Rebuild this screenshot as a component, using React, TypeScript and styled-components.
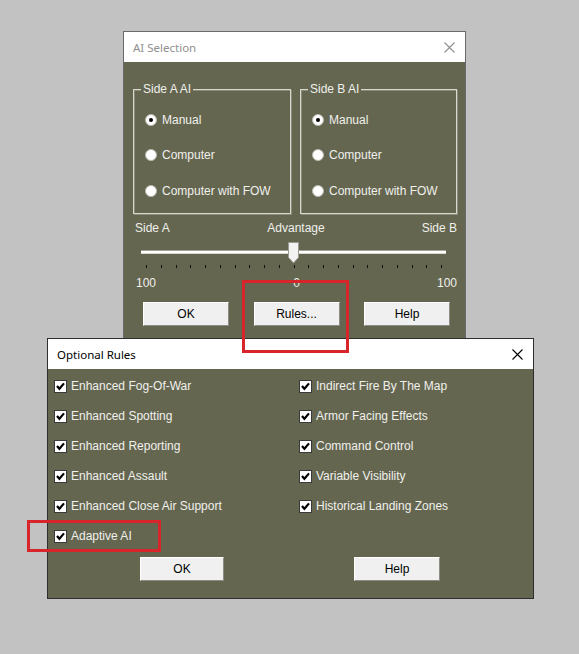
import styled, { createGlobalStyle } from 'styled-components';

const GlobalStyle = createGlobalStyle`
    html, body {
        margin: 0;
        padding: 0;
        background: #c2c2c2;
    }
    * {
        box-sizing: border-box;
    }
`;

const OLIVE = '#646650';

const Desktop = styled.div`
    position: relative;
    width: 579px;
    height: 654px;
    overflow: hidden;
    background: #c2c2c2;
    font-family: "Liberation Sans", Arial, sans-serif;
    font-size: 12px;
`;

const Window = styled.div<{ $left: number; $top: number; $width: number; $height: number; $active?: boolean }>`
    position: absolute;
    left: ${(p) => p.$left}px;
    top: ${(p) => p.$top}px;
    width: ${(p) => p.$width}px;
    height: ${(p) => p.$height}px;
    border: 1px solid ${(p) => (p.$active ? '#2e2e2e' : '#6a6a6a')};
    background: ${OLIVE};
    display: flex;
    flex-direction: column;
`;

const TitleBar = styled.div`
    height: 30px;
    flex: none;
    background: #ffffff;
    display: flex;
    align-items: center;
    justify-content: space-between;
    padding: 0 10px 0 9px;
`;

const Title = styled.span<{ $active?: boolean }>`
    font-family: "Noto Sans", "Open Sans", sans-serif;
    font-size: 11.5px;
    color: ${(p) => (p.$active ? '#000000' : '#8f8f8f')};
`;

const CloseIcon = ({ color }: { color: string }) => (
    <svg width="11" height="11" viewBox="0 0 11 11">
        <path d="M0.5 0.5 L10.5 10.5 M10.5 0.5 L0.5 10.5" stroke={color} strokeWidth="1.1" fill="none" />
    </svg>
);

const Body = styled.div<{ $pad: string }>`
    flex: 1;
    display: flex;
    flex-direction: column;
    padding: ${(p) => p.$pad};
    color: #f0f0ec;
`;

const GroupRow = styled.div`
    display: flex;
    gap: 9px;
    margin-top: 27px;
`;

const GroupBox = styled.div<{ $width: number }>`
    position: relative;
    width: ${(p) => p.$width}px;
    height: 125px;
    border: 1px solid #d8d8d0;
    box-shadow: inset 1px 1px 0 #8a8b78, 1px 1px 0 #8a8b78;
    padding: 12px 0 0 11px;
`;

const Legend = styled.span`
    position: absolute;
    top: -8px;
    left: 7px;
    padding: 0 2px;
    background: ${OLIVE};
    line-height: 14px;
`;

const OptionRow = styled.div`
    height: 35.5px;
    display: flex;
    align-items: center;
    gap: 5px;
`;

const Radio = styled.span<{ $checked?: boolean }>`
    width: 12px;
    height: 12px;
    border-radius: 50%;
    background: #ffffff;
    border: 1px solid #b9b9b0;
    display: flex;
    align-items: center;
    justify-content: center;

    &::after {
        content: '';
        width: 4px;
        height: 4px;
        border-radius: 50%;
        background: ${(p) => (p.$checked ? '#000000' : 'transparent')};
    }
`;

const SpreadRow = styled.div<{ $mt: number; $pad?: string }>`
    display: grid;
    grid-template-columns: 1fr auto 1fr;
    margin-top: ${(p) => p.$mt}px;
    padding: ${(p) => p.$pad || '0'};
    line-height: 14px;

    & > span:last-child {
        justify-self: end;
    }
`;

const SliderArea = styled.div`
    position: relative;
    height: 30px;
    margin-top: 3px;
    padding-top: 12px;
`;

const Track = styled.div`
    width: 305px;
    height: 4px;
    margin-left: 8px;
    border-top: 1px solid #a4a49a;
    background: #ffffff;
    border-bottom: 1px solid #d8d8d0;
`;

const Ticks = styled.div`
    width: 296px;
    margin: 11px 0 0 13px;
    display: flex;
    justify-content: space-between;
`;

const Tick = styled.span`
    width: 1px;
    height: 3px;
    background: #101010;
`;

const Thumb = styled.svg`
    position: absolute;
    left: 155px;
    top: 4px;
`;

const ButtonRow = styled.div<{ $mt: number; $pad: string; $gap?: number; $justify?: string }>`
    display: flex;
    justify-content: ${(p) => p.$justify || 'flex-start'};
    gap: ${(p) => p.$gap || 0}px;
    margin-top: ${(p) => p.$mt}px;
    padding: ${(p) => p.$pad};
`;

const Button = styled.button<{ $width: number }>`
    width: ${(p) => p.$width}px;
    height: 24px;
    background: #f0f0f0;
    border: 1px solid;
    border-color: #ffffff #8c8c84 #8c8c84 #ffffff;
    color: #000000;
    font-family: "Liberation Sans", Arial, sans-serif;
    font-size: 12px;
    padding: 0;
`;

const RulesGrid = styled.div`
    display: grid;
    grid-template-columns: 245px 1fr;
    padding-top: 2px;
`;

const RuleColumn = styled.div`
    display: flex;
    flex-direction: column;
`;

const CheckRow = styled.div`
    height: 30px;
    display: flex;
    align-items: center;
    gap: 4px;
`;

const CheckBox = styled.span`
    width: 13px;
    height: 13px;
    background: #ffffff;
    border: 1px solid #3a3a3a;
    display: flex;
    align-items: center;
    justify-content: center;
`;

const Highlight = styled.div<{ $left: number; $top: number; $width: number; $height: number }>`
    position: absolute;
    left: ${(p) => p.$left}px;
    top: ${(p) => p.$top}px;
    width: ${(p) => p.$width}px;
    height: ${(p) => p.$height}px;
    border: 3px solid #d8242b;
    pointer-events: none;
`;

const Check = () => (
    <CheckBox>
        <svg width="9" height="9" viewBox="0 0 9 9">
            <path d="M1 4 L3.4 6.8 L8 1.4" stroke="#000" strokeWidth="2.2" fill="none" />
        </svg>
    </CheckBox>
);

const options = ['Manual', 'Computer', 'Computer with FOW'];
const leftRules = [
    'Enhanced Fog-Of-War',
    'Enhanced Spotting',
    'Enhanced Reporting',
    'Enhanced Assault',
    'Enhanced Close Air Support',
    'Adaptive AI',
];
const rightRules = [
    'Indirect Fire By The Map',
    'Armor Facing Effects',
    'Command Control',
    'Variable Visibility',
    'Historical Landing Zones',
];

function SideGroup({ title, width }: { title: string; width: number }) {
    return (
        <GroupBox $width={width}>
            <Legend>{title}</Legend>
            {options.map((o, i) => (
                <OptionRow key={o}>
                    <Radio $checked={i === 0} />
                    <span>{o}</span>
                </OptionRow>
            ))}
        </GroupBox>
    );
}

export default function App() {
    return (
        <Desktop>
            <GlobalStyle />

            <Window $left={123} $top={31} $width={343} $height={330}>
                <TitleBar>
                    <Title>AI Selection</Title>
                    <CloseIcon color="#8f8f8f" />
                </TitleBar>
                <Body $pad="0 8px 0 9px">
                    <GroupRow>
                        <SideGroup title="Side A AI" width={158} />
                        <SideGroup title="Side B AI" width={157} />
                    </GroupRow>

                    <SpreadRow $mt={7} $pad="0 0 0 2px">
                        <span>Side A</span>
                        <span>Advantage</span>
                        <span>Side B</span>
                    </SpreadRow>

                    <SliderArea>
                        <Track />
                        <Ticks>
                            {Array.from({ length: 21 }).map((_, i) => (
                                <Tick key={i} />
                            ))}
                        </Ticks>
                        <Thumb width="11" height="22" viewBox="0 0 11 22">
                            <path d="M0.5 0.5 H10.5 V15.5 L5.5 21 L0.5 15.5 Z" fill="#f2f2f2" stroke="#9a9a92" />
                        </Thumb>
                    </SliderArea>

                    <SpreadRow $mt={8} $pad="0 0 0 3px">
                        <span>100</span>
                        <span>0</span>
                        <span>100</span>
                    </SpreadRow>

                    <ButtonRow $mt={12} $pad="0 7px 0 10px" $justify="space-between">
                        <Button $width={86}>OK</Button>
                        <Button $width={86}>Rules...</Button>
                        <Button $width={86}>Help</Button>
                    </ButtonRow>
                </Body>
            </Window>

            <Window $left={47} $top={338} $width={487} $height={261} $active>
                <TitleBar>
                    <Title $active>Optional Rules</Title>
                    <CloseIcon color="#000000" />
                </TitleBar>
                <Body $pad="0 0 0 6px">
                    <RulesGrid>
                        <RuleColumn>
                            {leftRules.map((r) => (
                                <CheckRow key={r}>
                                    <Check />
                                    <span>{r}</span>
                                </CheckRow>
                            ))}
                        </RuleColumn>
                        <RuleColumn>
                            {rightRules.map((r) => (
                                <CheckRow key={r}>
                                    <Check />
                                    <span>{r}</span>
                                </CheckRow>
                            ))}
                        </RuleColumn>
                    </RulesGrid>
                    <ButtonRow $mt={6} $pad="0 0 0 86px" $gap={130}>
                        <Button $width={84}>OK</Button>
                        <Button $width={86}>Help</Button>
                    </ButtonRow>
                </Body>
            </Window>

            <Highlight $left={242} $top={280} $width={107} $height={73} />
            <Highlight $left={27} $top={520} $width={134} $height={32} />
        </Desktop>
    );
}
